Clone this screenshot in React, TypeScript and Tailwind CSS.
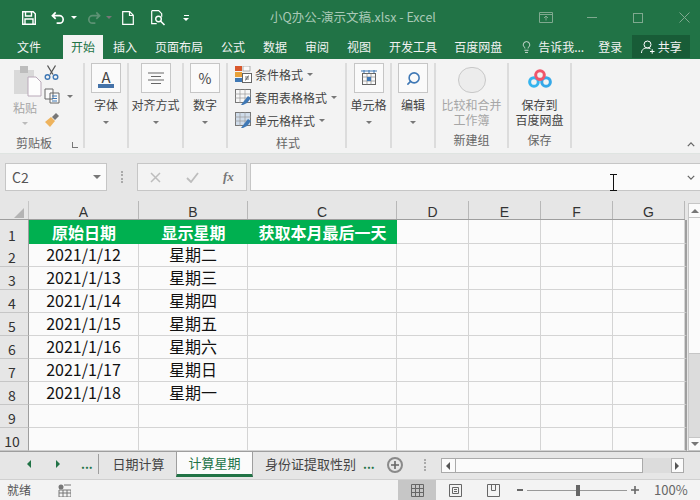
import { Search, Lightbulb } from 'lucide-react';

const font = 'font-["Noto_Sans_CJK_SC","Noto_Sans",sans-serif]';

const tabs = [
  { label: '插入', cls: 'ml-[10px]' },
  { label: '页面布局', cls: 'ml-[18px]' },
  { label: '公式', cls: 'ml-[18px]' },
  { label: '数据', cls: 'ml-[18px]' },
  { label: '审阅', cls: 'ml-[18px]' },
  { label: '视图', cls: 'ml-[18px]' },
  { label: '开发工具', cls: 'ml-[18px]' },
  { label: '百度网盘', cls: 'ml-[17px]' },
];

const columns = [
  { name: 'A', cls: 'w-[110px]' },
  { name: 'B', cls: 'w-[109px]' },
  { name: 'C', cls: 'w-[149px]' },
  { name: 'D', cls: 'w-[72px]' },
  { name: 'E', cls: 'w-[72px]' },
  { name: 'F', cls: 'w-[72px]' },
  { name: 'G', cls: 'w-[72px]' },
];

const rows = [
  ['2021/1/12', '星期二'],
  ['2021/1/13', '星期三'],
  ['2021/1/14', '星期四'],
  ['2021/1/15', '星期五'],
  ['2021/1/16', '星期六'],
  ['2021/1/17', '星期日'],
  ['2021/1/18', '星期一'],
  ['', ''],
  ['', ''],
];

function Caret({ className = '' }: { className?: string }) {
  return <div className={`w-0 h-0 border-x-[3px] border-x-transparent border-t-[3px] border-t-[#777] ${className}`} />;
}

function BigButton({ label, width, children }: { label: string; width: string; children: React.ReactNode }) {
  return (
    <div className={`${width} flex flex-col items-center shrink-0 border-r-2 border-[#dcdcdc] h-[85px] mt-[4px]`}>
      <div className="w-[30px] h-[30px] bg-[#fafafa] border border-[#c6c6c6] flex items-center justify-center">{children}</div>
      <span className="text-[12px] leading-[16px] mt-[4px] text-[#444] whitespace-nowrap">{label}</span>
      <Caret className="mt-[8px]" />
    </div>
  );
}

function StyleRow({ label, caret, children }: { label: string; caret?: boolean; children: React.ReactNode }) {
  return (
    <div className="flex items-center h-[23px] text-[12px] text-[#444]">
      <div className="w-[17px] h-[17px] mr-[3px] shrink-0">{children}</div>
      <span className="whitespace-nowrap">{label}</span>
      {caret && <Caret className="ml-[4px]" />}
    </div>
  );
}

function TableIcon({ fill }: { fill: string }) {
  return (
    <svg viewBox="0 0 17 17" className="w-[17px] h-[17px]">
      <rect x="0.5" y="0.5" width="15" height="13" fill={fill} stroke="#777" />
      <path d="M0 5h16M0 9h16M5 0v14M10 0v14" stroke="#999" strokeWidth="0.7" />
      <path d="M6 16l3-4 4-5 3 2-4 5-4 2z" fill="#3f78b5" />
    </svg>
  );
}

function Ribbon() {
  return (
    <div className="h-[94px] bg-[#f3f3f3] flex pl-[6px] relative shrink-0">
      {/* 剪贴板 */}
      <div className="w-[79px] shrink-0 border-r-2 border-[#dcdcdc] h-[85px] mt-[4px] relative flex">
        <div className="w-[38px] flex flex-col items-center">
          <svg viewBox="0 0 30 32" className="w-[30px] h-[32px] mt-[2px] ml-[6px]">
            <rect x="1" y="5" width="20" height="24" fill="#d9d9d9" />
            <rect x="7" y="1" width="8" height="7" fill="#bdbdbd" />
            <path d="M15 12h8l5 5v14H15z" fill="#fdfdfd" stroke="#b9a9b9" />
          </svg>
          <span className="text-[12px] leading-[16px] text-[#a6a6a6] mt-[3px]">粘贴</span>
          <Caret className="mt-[6px] border-t-[#bbb]" />
        </div>
        <div className="flex flex-col items-start mt-[2px]">
          <svg viewBox="0 0 15 15" className="w-[15px] h-[15px]">
            <path d="M3.5 0.5l5.5 9M11.5 0.5l-5.5 9" stroke="#555" strokeWidth="1.3" fill="none" />
            <circle cx="3.5" cy="12" r="2.3" fill="none" stroke="#3f78b5" strokeWidth="1.4" />
            <circle cx="11.5" cy="12" r="2.3" fill="none" stroke="#3f78b5" strokeWidth="1.4" />
          </svg>
          <div className="flex items-center mt-[8px]">
            <svg viewBox="0 0 16 16" className="w-[16px] h-[16px]">
              <path d="M1 1h8v10H1zM6 5h9v10H6z" fill="#fafafa" stroke="#666" />
              <path d="M8 8h5M8 10.5h5M8 13h5" stroke="#3f78b5" />
            </svg>
            <Caret className="ml-[7px]" />
          </div>
          <svg viewBox="0 0 16 16" className="w-[16px] h-[16px] mt-[8px]">
            <path d="M1 10l6-5 4 4-5 6z" fill="#eeb35d" />
            <path d="M8 5l4-4 3 3-4 4z" fill="#777" />
          </svg>
        </div>
        <span className="absolute left-[10px] -bottom-[3px] text-[12px] leading-[16px] text-[#666]">剪贴板</span>
        <span className="absolute right-[5px] bottom-0 w-[6px] h-[6px] border-l border-b border-[#777]" />
      </div>

      <BigButton label="字体" width="w-[44px]">
        <div className="flex flex-col items-center">
          <span className="text-[15px] leading-[15px] text-[#444]">A</span>
          <div className="w-[16px] h-[4px] bg-[#4472a8]" />
        </div>
      </BigButton>
      <BigButton label="对齐方式" width="w-[55px]">
        <svg viewBox="0 0 16 12" className="w-[16px] h-[12px]"><path d="M0 1h16M3 4.5h10M0 8h16M3 11.5h10" stroke="#666" /></svg>
      </BigButton>
      <BigButton label="数字" width="w-[44px]">
        <span className="text-[14px] text-[#444]">%</span>
      </BigButton>

      {/* 样式 */}
      <div className="w-[119px] shrink-0 border-r-2 border-[#dcdcdc] h-[85px] mt-[4px] pl-[7px] flex flex-col relative">
        <StyleRow label="条件格式" caret>
          <svg viewBox="0 0 17 17" className="w-[17px] h-[17px]">
            <rect x="0" y="0" width="7" height="5" fill="#d9582c" />
            <rect x="0" y="6" width="7" height="5" fill="#e8a23b" />
            <rect x="0" y="12" width="7" height="4" fill="#3f78b5" />
            <rect x="8" y="0" width="7" height="5" fill="#fafafa" stroke="#888" strokeWidth="0.6" />
            <rect x="7.5" y="7.5" width="9" height="9" fill="#fff" stroke="#666" />
            <path d="M10 11h4M10 13h4M13.5 9.5l-3 5" stroke="#555" strokeWidth="0.8" />
          </svg>
        </StyleRow>
        <StyleRow label="套用表格格式" caret><TableIcon fill="#f7f7f7" /></StyleRow>
        <StyleRow label="单元格样式" caret><TableIcon fill="#cfdcea" /></StyleRow>
        <span className="absolute left-[48px] -bottom-[3px] text-[12px] leading-[16px] text-[#666]">样式</span>
      </div>

      <BigButton label="单元格" width="w-[45px]">
        <svg viewBox="0 0 16 16" className="w-[16px] h-[16px]">
          <path d="M0 1h16M3 0v3M8 0v3M13 0v3" stroke="#3f78b5" />
          <rect x="1.5" y="3.5" width="13" height="11" fill="none" stroke="#666" />
          <path d="M1.5 7h13M1.5 11h13M6 3.5v11M10 3.5v11" stroke="#888" strokeWidth="0.7" />
          <rect x="6" y="7" width="4" height="4" fill="#3f78b5" />
        </svg>
      </BigButton>
      <BigButton label="编辑" width="w-[44px]">
        <Search className="w-[15px] h-[15px] text-[#3f78b5] -scale-x-100" strokeWidth={2.5} />
      </BigButton>

      {/* 新建组 */}
      <div className="w-[73px] shrink-0 border-r-2 border-[#dcdcdc] h-[85px] mt-[4px] flex flex-col items-center">
        <div className="w-[28px] h-[29px] mt-[4px] rounded-full border border-[#c8c8c8] bg-[#ececec]" />
        <span className="text-[12px] leading-[15px] text-[#a6a6a6] mt-[4px] whitespace-nowrap">比较和合并</span>
        <span className="text-[12px] leading-[15px] text-[#a6a6a6]">工作簿</span>
        <span className="text-[12px] leading-[16px] text-[#666] mt-[5px]">新建组</span>
      </div>

      {/* 保存 */}
      <div className="w-[63px] shrink-0 border-r-2 border-[#dcdcdc] h-[85px] mt-[4px] flex flex-col items-center">
        <svg viewBox="0 0 28 22" className="w-[28px] h-[22px] mt-[6px]">
          <circle cx="7" cy="15" r="5" fill="none" stroke="#35b4ee" strokeWidth="3.5" />
          <circle cx="21" cy="15" r="5" fill="none" stroke="#35a8e8" strokeWidth="3.5" />
          <circle cx="14" cy="7" r="5" fill="none" stroke="#f0566a" strokeWidth="3.5" />
        </svg>
        <span className="text-[12px] leading-[15px] text-[#444] mt-[9px]">保存到</span>
        <span className="text-[12px] leading-[15px] text-[#444] whitespace-nowrap">百度网盘</span>
        <span className="text-[12px] leading-[16px] text-[#666] mt-[5px]">保存</span>
      </div>

      <svg viewBox="0 0 10 6" className="absolute right-[5px] bottom-[6px] w-[8px] h-[5px]">
        <path d="M1 5l4-4 4 4" fill="none" stroke="#666" strokeWidth="1.6" />
      </svg>
    </div>
  );
}

function Sheet() {
  return (
    <div className="flex-1 flex min-h-0">
      <div className="w-[685px] shrink-0 flex flex-col">
        {/* column headers */}
        <div className="h-[18px] flex">
          <div className="w-[29px] shrink-0 flex items-end justify-end pr-[4px] pb-[1px] border-r border-[#c6c6c6]">
            <div className="w-0 h-0 border-l-[10px] border-l-transparent border-b-[10px] border-b-[#b4b4b4]" />
          </div>
          {columns.map((c) => (
            <div key={c.name} className={`${c.cls} shrink-0 border-r border-[#b8b8b8] text-center font-['Liberation_Sans'] text-[14px] leading-[16px] text-[#333] pt-[3px]`}>{c.name}</div>
          ))}
        </div>
        {/* first row */}
        <div className="flex h-[25px] border-t border-[#9e9e9e]">
          <div className="w-[29px] shrink-0 border-r border-[#9e9e9e] text-center text-[14px] leading-[30px] text-[#333] pr-[4px]">1</div>
          {['原始日期', '显示星期', '获取本月最后一天'].map((t, i) => (
            <div key={t} className={`${columns[i].cls} shrink-0 bg-[#00b050] text-white font-bold text-[16px] leading-[24px] text-center`}>{t}</div>
          ))}
          <div className="flex-1 flex bg-[#fbfbfb] border-b border-[#d4d4d4] border-r-2 border-r-[#9e9e9e]">
            {columns.slice(3).map((c) => (
              <div key={c.name} className={`${c.cls} shrink-0 border-r border-[#d4d4d4]`} />
            ))}
          </div>
        </div>
        {rows.map((r, i) => (
          <div key={i} className="flex h-[23px]">
            <div className="w-[29px] shrink-0 border-r border-[#9e9e9e] border-b border-b-[#c6c6c6] text-center text-[14px] leading-[27px] text-[#333] pr-[4px]">{i + 2}</div>
            <div className="flex-1 flex bg-[#fbfbfb] border-b border-[#d4d4d4] border-r-2 border-r-[#9e9e9e]">
              {columns.map((c, j) => (
                <div key={c.name} className={`${c.cls} shrink-0 border-r border-[#d4d4d4] text-center text-[16px] leading-[21px] text-[#111]`}>{r[j] ?? ''}</div>
              ))}
            </div>
          </div>
        ))}
      </div>
      {/* vertical scrollbar */}
      <div className="w-[12px] ml-[3px] mt-[2px] shrink-0 flex flex-col border-l border-[#c6c6c6]">
        <div className="h-[15px] bg-[#fbfbfb] border-y border-[#c6c6c6] flex items-center justify-center">
          <div className="w-0 h-0 border-x-[4px] border-x-transparent border-b-[4px] border-b-[#777]" />
        </div>
        <div className="h-[136px] bg-[#fbfbfb] border-b border-[#c6c6c6]" />
        <div className="flex-1 bg-[#dcdcdc]" />
        <div className="h-[14px] bg-[#fbfbfb] border-y border-[#c6c6c6] flex items-center justify-center">
          <div className="w-0 h-0 border-x-[4px] border-x-transparent border-t-[4px] border-t-[#777]" />
        </div>
      </div>
    </div>
  );
}

function SheetTabs() {
  return (
    <div className="h-[28px] shrink-0 flex border-t border-[#9e9e9e] bg-[#e6e6e6] relative">
      <div className="flex items-center w-[101px] shrink-0 pb-[3px]">
        <div className="ml-[27px] w-0 h-0 border-y-[4px] border-y-transparent border-r-[4px] border-r-[#217346]" />
        <div className="ml-[25px] w-0 h-0 border-y-[4px] border-y-transparent border-l-[4px] border-l-[#217346]" />
        <span className="ml-[21px] text-[12px] leading-[12px] font-bold text-[#217346]">...</span>
        <div className="ml-[5px] w-px h-[20px] bg-[#9e9e9e]" />
      </div>
      <div className="w-[75px] shrink-0 text-center text-[13px] leading-[23px] text-[#444]">日期计算</div>
      <div className="w-[77px] h-[25px] shrink-0 bg-[#fbfbfb] border-x border-[#9e9e9e] border-b-[3px] border-b-[#217346] text-center text-[13px] leading-[22px] text-[#217346]">计算星期</div>
      <div className="w-[104px] shrink-0 pl-[12px] text-[13px] leading-[23px] text-[#444] whitespace-nowrap overflow-hidden">身份证提取性别</div>
      <span className="ml-[6px] text-[12px] leading-[24px] font-bold text-[#217346]">...</span>
      <div className="ml-[12px] mt-[5px] w-[16px] h-[16px] rounded-full border-2 border-[#8a8a8a] flex items-center justify-center shrink-0">
        <svg viewBox="0 0 8 8" className="w-[8px] h-[8px]"><path d="M4 0v8M0 4h8" stroke="#666" strokeWidth="1.6" /></svg>
      </div>
      <div className="ml-[21px] w-[2px] h-[12px] mt-[7px] border-l-2 border-dotted border-[#aaa] shrink-0" />
      <div className="ml-[15px] flex h-[15px] mt-[6px] shrink-0">
        <div className="w-[15px] bg-[#fbfbfb] border border-[#aaa] flex items-center justify-center">
          <div className="w-0 h-0 border-y-[4px] border-y-transparent border-r-[4px] border-r-[#555]" />
        </div>
        <div className="w-[187px] bg-[#fbfbfb] border-y border-r border-[#aaa]" />
        <div className="w-[28px] bg-[#dcdcdc]" />
        <div className="w-[13px] bg-[#fbfbfb] border border-[#aaa] flex items-center justify-center">
          <div className="w-0 h-0 border-y-[4px] border-y-transparent border-l-[4px] border-l-[#555]" />
        </div>
      </div>
    </div>
  );
}

function StatusBar() {
  return (
    <div className="h-[21px] shrink-0 bg-[#f3f3f3] border-t border-[#d0d0d0] flex items-center text-[12px] text-[#555]">
      <span className="ml-[7px]">就绪</span>
      <svg viewBox="0 0 13 13" className="ml-[27px] w-[13px] h-[13px] shrink-0">
        <circle cx="3" cy="3" r="2.5" fill="#777" />
        <path d="M6 1h7M1 6h12v7H1zM1 9h12M5 6v7M9 6v7" fill="none" stroke="#777" />
      </svg>
      <div className="ml-[327px] w-[38px] h-full bg-[#c6c6c6] flex items-center justify-center shrink-0">
        <svg viewBox="0 0 13 13" className="w-[13px] h-[13px]"><path d="M.5.5h12v12H.5zM.5 4.5h12M.5 8.5h12M4.5.5v12M8.5.5v12" fill="none" stroke="#666" /></svg>
      </div>
      <div className="w-[38px] flex justify-center shrink-0">
        <svg viewBox="0 0 13 13" className="w-[13px] h-[13px]"><path d="M.5.5h12v12H.5zM3.5 3.5h6v6h-6zM5 5.5h3M5 7.5h3" fill="none" stroke="#666" /></svg>
      </div>
      <div className="w-[38px] flex justify-center shrink-0">
        <svg viewBox="0 0 13 13" className="w-[13px] h-[13px]"><path d="M.5.5h12v12H.5zM4.5.5v6h4v-6" fill="none" stroke="#666" /></svg>
      </div>
      <span className="ml-[5px] w-[6px] h-[2px] bg-[#666] shrink-0" />
      <div className="ml-[4px] w-[100px] h-px bg-[#999] relative shrink-0">
        <span className="absolute left-[49px] -top-[5px] w-[4px] h-[11px] bg-[#666]" />
      </div>
      <svg viewBox="0 0 8 8" className="ml-[4px] w-[8px] h-[8px] shrink-0"><path d="M4 0v8M0 4h8" stroke="#666" strokeWidth="1.6" /></svg>
      <span className="ml-[15px] text-[13px] leading-[16px] text-[#666]">100%</span>
    </div>
  );
}

export default function App() {
  return (
    <div className={`w-[700px] h-[500px] flex flex-col overflow-hidden bg-[#e6e6e6] relative ${font}`}>
      {/* title bar */}
      <div className="h-[35px] shrink-0 bg-[#217346] flex items-center relative">
        <svg viewBox="0 0 14 14" className="ml-[22px] w-[14px] h-[14px]">
          <path d="M.7.7h10.5l2.1 2.1v10.5H.7z" fill="none" stroke="#fff" strokeWidth="1.4" />
          <path d="M3.5 1v4h6V1M3 13V8h8v5" fill="none" stroke="#fff" strokeWidth="1.4" />
        </svg>
        <svg viewBox="0 0 16 14" className="ml-[15px] w-[15px] h-[14px]">
          <path d="M5 1L1.5 4.5 5 8M2 4.5h7a4 4 0 010 8H6" fill="none" stroke="#fff" strokeWidth="1.8" />
        </svg>
        <Caret className="ml-[5px] border-t-white" />
        <svg viewBox="0 0 16 14" className="ml-[9px] w-[15px] h-[14px]">
          <path d="M11 1l3.5 3.5L11 8M14 4.5H7a4 4 0 000 8h3" fill="none" stroke="#5d9274" strokeWidth="1.8" />
        </svg>
        <Caret className="ml-[5px] border-t-[#5d9274]" />
        <svg viewBox="0 0 12 14" className="ml-[10px] w-[12px] h-[14px]">
          <path d="M.7.7h7l3.6 3.6v9H.7zM7.5.7v3.8h3.8" fill="none" stroke="#fff" strokeWidth="1.2" />
        </svg>
        <svg viewBox="0 0 15 16" className="ml-[17px] w-[15px] h-[16px]">
          <path d="M.7.7h7l3 3v3M.7.7v13h5" fill="none" stroke="#fff" strokeWidth="1.2" />
          <circle cx="7.5" cy="9" r="2.8" fill="none" stroke="#fff" strokeWidth="1.4" />
          <path d="M9.5 11l4 4" stroke="#fff" strokeWidth="1.6" />
        </svg>
        <div className="ml-[17px] flex flex-col items-center gap-[2px]">
          <div className="w-[5px] h-px bg-white" />
          <Caret className="border-t-white" />
        </div>
        <span className="ml-[81px] w-[164px] text-[12.5px] text-[#a9c9b6] whitespace-nowrap shrink-0">小Q办公-演示文稿.xlsx - Excel</span>
        <svg viewBox="0 0 14 11" className="ml-[105px] w-[14px] h-[11px] shrink-0">
          <path d="M.5.5h13v10H.5zM.5 2.5h13M7 8.5V4.5M5 6l2-2 2 2" fill="none" stroke="#7fa98f" />
        </svg>
        <div className="ml-[34px] w-[10px] h-px bg-[#7fa98f] shrink-0" />
        <div className="ml-[36px] w-[10px] h-[10px] border border-[#7fa98f] shrink-0" />
        <svg viewBox="0 0 11 11" className="ml-[36px] w-[11px] h-[11px] shrink-0">
          <path d="M.5.5l10 10M10.5.5l-10 10" stroke="#7fa98f" />
        </svg>
      </div>

      {/* ribbon tabs */}
      <div className="h-[24px] shrink-0 bg-[#217346] flex items-end text-[12px] text-[#f2f2f2]">
        <span className="ml-[17px] leading-[24px]">文件</span>
        <span className="ml-[22px] w-[40px] h-[24px] bg-[#f3f3f3] text-[#217346] text-center leading-[24px]">开始</span>
        {tabs.map((t) => (
          <span key={t.label} className={`${t.cls} leading-[24px] whitespace-nowrap`}>{t.label}</span>
        ))}
        <Lightbulb className="ml-[18px] w-[13px] h-[16px] mb-[4px]" strokeWidth={1.5} />
        <span className="ml-[5px] leading-[24px] whitespace-nowrap">告诉我...</span>
        <span className="ml-[14px] leading-[24px]">登录</span>
        <div className="ml-[10px] w-[58px] h-[23px] mb-[1px] bg-[#185c37] flex items-center justify-center gap-[3px] shrink-0">
          <svg viewBox="0 0 14 14" className="w-[14px] h-[14px]">
            <circle cx="6.5" cy="4.5" r="3.5" fill="none" stroke="#fff" />
            <path d="M.5 13c0-4 3-5 6-5 1 0 2 .2 3 .7M9 11.5h4.5M11.2 9.2v4.5" fill="none" stroke="#fff" />
          </svg>
          <span>共享</span>
        </div>
      </div>

      <Ribbon />

      {/* formula bar */}
      <div className="h-[48px] shrink-0 flex items-start border-t border-[#dfe4e1] pt-[9px]">
        <div className="ml-[5px] w-[102px] h-[28px] bg-[#fbfbfb] border border-[#c6c6c6] flex items-center justify-between pl-[6px] pr-[5px]">
          <span className="text-[14px] text-[#555]">C2</span>
          <div className="w-0 h-0 border-x-[4px] border-x-transparent border-t-[4px] border-t-[#777]" />
        </div>
        <div className="ml-[14px] mt-[8px] w-[3px] h-[12px] border-l-2 border-dotted border-[#aaa]" />
        <div className="ml-[13px] w-[110px] h-[28px] bg-[#f3f3f3] border border-[#c6c6c6] flex items-center">
          <svg viewBox="0 0 11 11" className="ml-[12px] w-[11px] h-[11px]"><path d="M1 1l9 9M10 1l-9 9" stroke="#bdbdbd" strokeWidth="1.5" /></svg>
          <svg viewBox="0 0 13 11" className="ml-[25px] w-[13px] h-[11px]"><path d="M1 6l4 4 7-9" fill="none" stroke="#bdbdbd" strokeWidth="1.8" /></svg>
          <span className="ml-[24px] text-[13px] italic font-['Liberation_Serif'] font-bold text-[#777]">fx</span>
        </div>
        <div className="ml-[3px] flex-1 h-[28px] bg-[#fbfbfb] border-y border-l border-[#c6c6c6] flex items-center justify-end pr-[5px]">
          <svg viewBox="0 0 10 6" className="w-[8px] h-[5px]"><path d="M1 1l4 4 4-4" fill="none" stroke="#666" strokeWidth="1.6" /></svg>
        </div>
      </div>

      <Sheet />
      <SheetTabs />
      <StatusBar />

      {/* text cursor over the formula bar */}
      <svg viewBox="0 0 7 17" className="absolute left-[610px] top-[174px] w-[7px] h-[17px]">
        <path d="M0 .5h7M0 16.5h7M3.5 .5v16" stroke="#111" />
      </svg>
    </div>
  );
}
